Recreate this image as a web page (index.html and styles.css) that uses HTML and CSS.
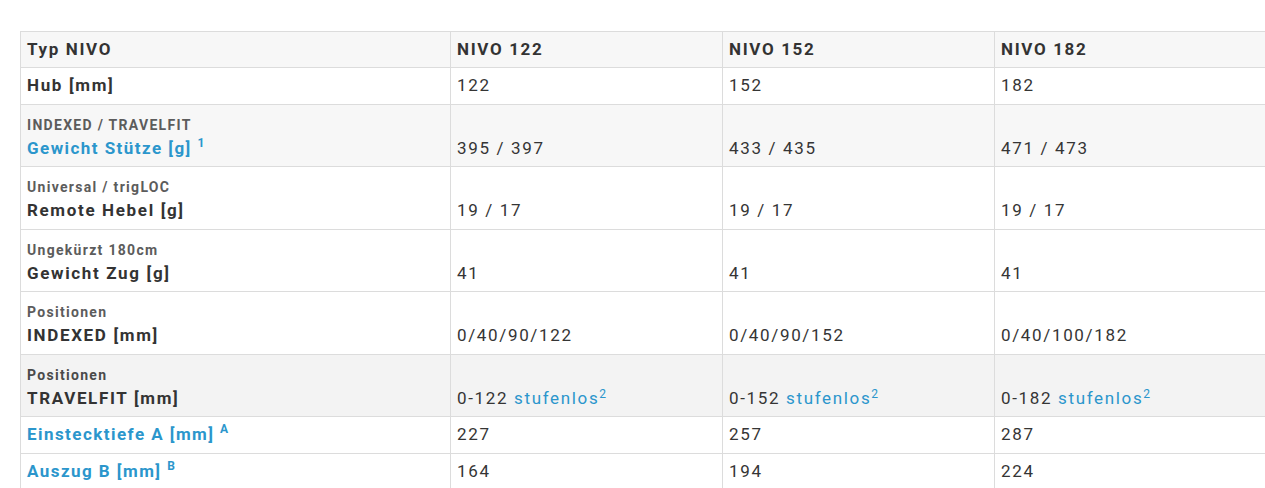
FILE: index.html
```html
<!DOCTYPE html>
<html>
<head>
<meta charset="utf-8">
<link rel="stylesheet" href="styles.css">
</head>
<body>
<div class="wrap">
<table class="spec">
  <colgroup>
    <col class="c1"><col class="c2"><col class="c2"><col class="c2">
  </colgroup>
  <tr class="grey head">
    <th>Typ NIVO</th><th>NIVO 122</th><th>NIVO 152</th><th>NIVO 182</th>
  </tr>
  <tr>
    <td class="lbl">Hub [mm]</td><td>122</td><td>152</td><td>182</td>
  </tr>
  <tr class="grey tall">
    <td class="lbl"><span class="sub">INDEXED / TRAVELFIT</span><span class="blue">Gewicht Stütze [g] <sup>1</sup></span></td>
    <td>395 / 397</td><td>433 / 435</td><td>471 / 473</td>
  </tr>
  <tr class="tall">
    <td class="lbl"><span class="sub">Universal / trigLOC</span>Remote Hebel [g]</td>
    <td>19 / 17</td><td>19 / 17</td><td>19 / 17</td>
  </tr>
  <tr class="tall">
    <td class="lbl"><span class="sub">Ungekürzt 180cm</span>Gewicht Zug [g]</td>
    <td>41</td><td>41</td><td>41</td>
  </tr>
  <tr class="tall">
    <td class="lbl"><span class="sub">Positionen</span>INDEXED [mm]</td>
    <td>0/40/90/122</td><td>0/40/90/152</td><td>0/40/100/182</td>
  </tr>
  <tr class="grey2 tall">
    <td class="lbl"><span class="sub dark">Positionen</span>TRAVELFIT [mm]</td>
    <td>0-122 <span class="link">stufenlos<sup>2</sup></span></td>
    <td>0-152 <span class="link">stufenlos<sup>2</sup></span></td>
    <td>0-182 <span class="link">stufenlos<sup>2</sup></span></td>
  </tr>
  <tr>
    <td class="lbl"><span class="blue">Einstecktiefe A [mm] <sup>A</sup></span></td>
    <td>227</td><td>257</td><td>287</td>
  </tr>
  <tr>
    <td class="lbl"><span class="blue">Auszug B [mm] <sup>B</sup></span></td>
    <td>164</td><td>194</td><td>224</td>
  </tr>
</table>
</div>
</body>
</html>
```
FILE: styles.css
```css
html, body {
  margin: 0;
  padding: 0;
  background: #fff;
  overflow: hidden;
}
.wrap {
  padding: 31px 0 0 20px;
  width: 1600px;
}
.spec {
  border-collapse: collapse;
  width: 1246px;
  table-layout: fixed;
  font-family: Roboto, "Liberation Sans", sans-serif;
  font-size: 17px;
  color: #353535;
  letter-spacing: 1.65px;
}
.c1 { width: 430px; }
.c2 { width: 272px; }
.spec th, .spec td {
  border: 1px solid #dcdcdc;
  padding: 6px 6px 7.5px 6px;
  text-align: left;
  vertical-align: bottom;
  line-height: 22px;
}
.spec tr.head th {
  padding-top: 6px;
  padding-bottom: 7px;
}
.spec th {
  font-weight: 700;
  color: #333;
}
.spec tr.grey { background: #f7f7f7; }
.spec tr.grey2 { background: #f3f3f3; }
.spec tr.tall td {
  padding-top: 11px;
  padding-bottom: 7.5px;
}
.lbl {
  font-weight: 700;
  color: #333;
}
.sub {
  display: block;
  font-size: 14px;
  line-height: 18px;
  letter-spacing: 1.3px;
  color: #5c5c5c;
  margin-bottom: 3px;
}
.sub.dark { color: #4a4a4a; }
.blue { color: #2b96cc; letter-spacing: 1.45px; }
.link { color: #2b96cc; }
sup {
  font-size: 12px;
  line-height: 0;
  vertical-align: 7px;
  letter-spacing: 0;
}
.link sup { vertical-align: 6px; }
```
